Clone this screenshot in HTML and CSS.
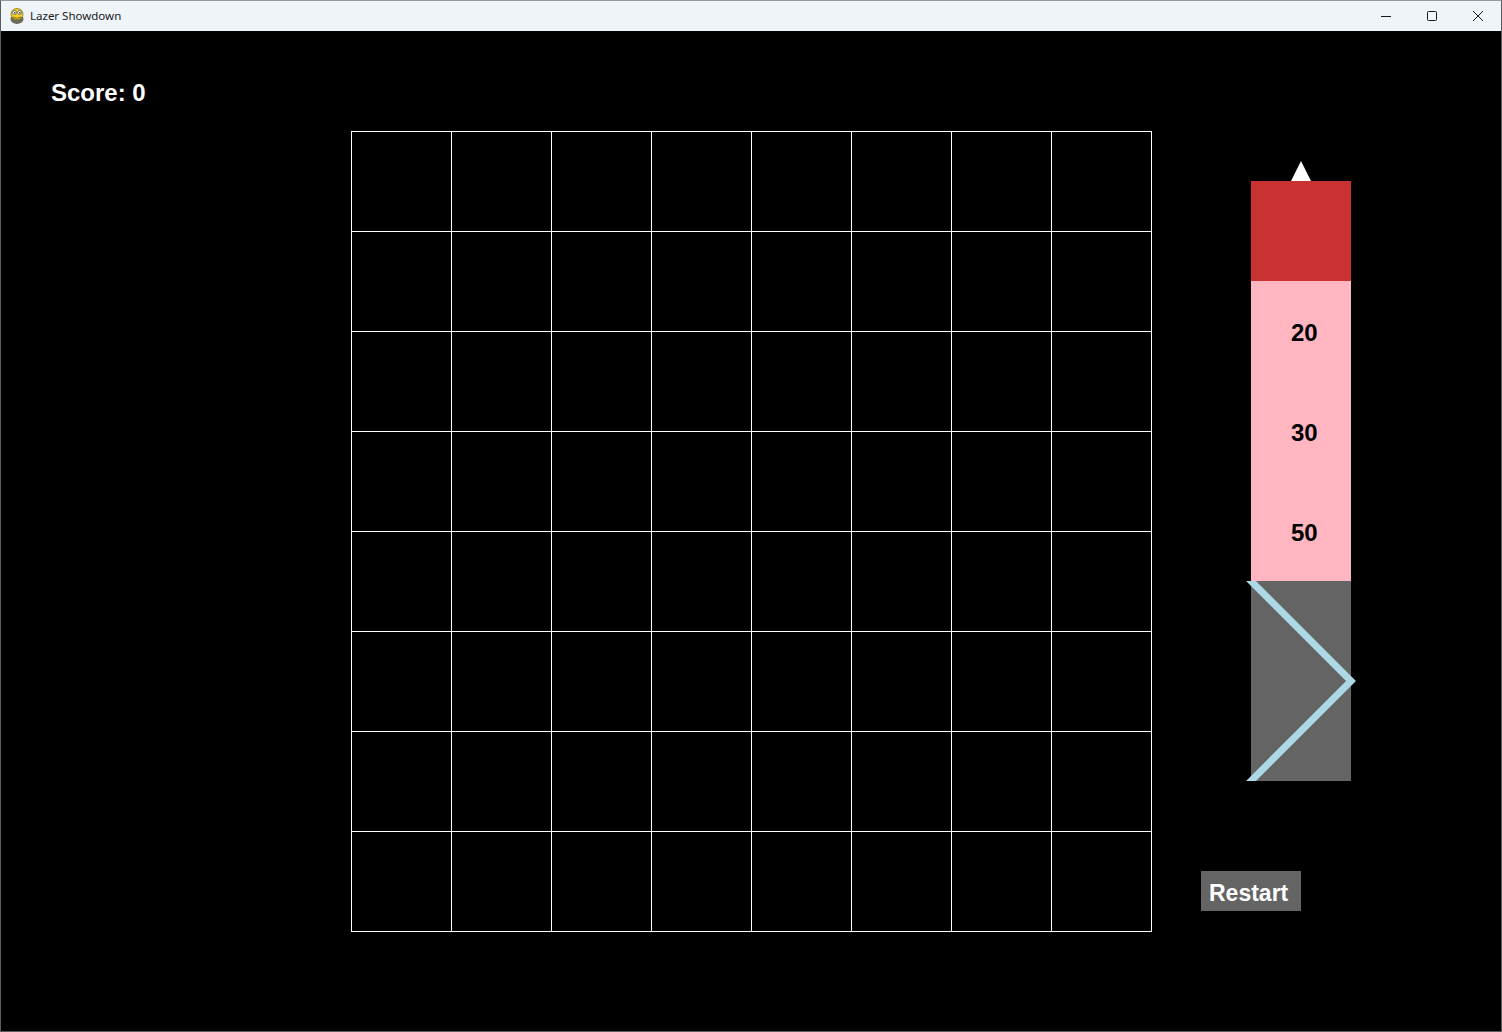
FILE: index.html
```html
<!DOCTYPE html>
<html>
<head>
<meta charset="utf-8">
<title>Lazer Showdown</title>
<link rel="stylesheet" href="styles.css">
</head>
<body>
<div class="window">
  <div class="titlebar">
    <div class="title-left">
      <svg class="app-icon" width="16" height="18" viewBox="0 0 16 18">
        <ellipse cx="8" cy="12" rx="6.5" ry="5" fill="#6b6b5a"/>
        <ellipse cx="8" cy="7" rx="6" ry="5.5" fill="#f2d22c" stroke="#8a7a10" stroke-width="0.8"/>
        <circle cx="5.5" cy="5.5" r="2" fill="#fff" stroke="#333" stroke-width="0.6"/>
        <circle cx="10.5" cy="5.5" r="2" fill="#fff" stroke="#333" stroke-width="0.6"/>
        <circle cx="5.8" cy="5.8" r="0.8" fill="#222"/>
        <circle cx="10.8" cy="5.8" r="0.8" fill="#222"/>
        <path d="M4 10 Q8 12.5 12 10" fill="none" stroke="#7a5a10" stroke-width="0.8"/>
      </svg>
      <span class="title-text">Lazer Showdown</span>
    </div>
    <div class="controls">
      <span class="ctl"><svg width="12" height="12" viewBox="0 0 12 12"><path d="M1 6.5 H11" stroke="#1a1a1a" stroke-width="1"/></svg></span>
      <span class="ctl"><svg width="12" height="12" viewBox="0 0 12 12"><rect x="1.5" y="1.5" width="9" height="9" rx="1" fill="none" stroke="#1a1a1a" stroke-width="1"/></svg></span>
      <span class="ctl"><svg width="12" height="12" viewBox="0 0 12 12"><path d="M1 1 L11 11 M11 1 L1 11" stroke="#1a1a1a" stroke-width="1"/></svg></span>
    </div>
  </div>
  <div class="game">
    <div class="left-col">
      <div class="score">Score: 0</div>
    </div>
    <div class="board">
      <div class="cell"></div><div class="cell"></div><div class="cell"></div><div class="cell"></div><div class="cell"></div><div class="cell"></div><div class="cell"></div><div class="cell"></div>
      <div class="cell"></div><div class="cell"></div><div class="cell"></div><div class="cell"></div><div class="cell"></div><div class="cell"></div><div class="cell"></div><div class="cell"></div>
      <div class="cell"></div><div class="cell"></div><div class="cell"></div><div class="cell"></div><div class="cell"></div><div class="cell"></div><div class="cell"></div><div class="cell"></div>
      <div class="cell"></div><div class="cell"></div><div class="cell"></div><div class="cell"></div><div class="cell"></div><div class="cell"></div><div class="cell"></div><div class="cell"></div>
      <div class="cell"></div><div class="cell"></div><div class="cell"></div><div class="cell"></div><div class="cell"></div><div class="cell"></div><div class="cell"></div><div class="cell"></div>
      <div class="cell"></div><div class="cell"></div><div class="cell"></div><div class="cell"></div><div class="cell"></div><div class="cell"></div><div class="cell"></div><div class="cell"></div>
      <div class="cell"></div><div class="cell"></div><div class="cell"></div><div class="cell"></div><div class="cell"></div><div class="cell"></div><div class="cell"></div><div class="cell"></div>
      <div class="cell"></div><div class="cell"></div><div class="cell"></div><div class="cell"></div><div class="cell"></div><div class="cell"></div><div class="cell"></div><div class="cell"></div>
    </div>
    <div class="right-col">
      <div class="queue">
        <div class="pointer"></div>
        <div class="slot slot-red"></div>
        <div class="slot slot-pink"><span class="num">20</span></div>
        <div class="slot slot-pink"><span class="num">30</span></div>
        <div class="slot slot-pink"><span class="num">50</span></div>
        <div class="slot slot-gray">
          <svg class="chevron" width="120" height="200" viewBox="0 0 120 200">
            <polyline points="5,-5 110,100 5,205" fill="none" stroke="#add8e6" stroke-width="7" stroke-linejoin="miter" stroke-miterlimit="10"/>
          </svg>
        </div>
      </div>
      <div class="restart">Restart</div>
    </div>
  </div>
</div>
</body>
</html>
```

FILE: styles.css
```css
* {
  box-sizing: border-box;
}

html, body {
  margin: 0;
  padding: 0;
  background: #000;
}

.window {
  width: 1502px;
  height: 1032px;
  border: 1px solid #5c5c5c;
  border-top-color: #9a9a9a;
  display: flex;
  flex-direction: column;
  overflow: hidden;
}

.titlebar {
  height: 30px;
  flex: none;
  background: #eff4f9;
  display: flex;
  align-items: center;
  justify-content: space-between;
}

.title-left {
  display: flex;
  align-items: center;
  padding-left: 8px;
}

.app-icon {
  display: block;
}

.title-text {
  margin-left: 5px;
  font-family: "Noto Sans", "DejaVu Sans", sans-serif;
  font-size: 11.5px;
  color: #1a1a1a;
  line-height: 16px;
}

.controls {
  display: flex;
  height: 30px;
}

.ctl {
  width: 46px;
  height: 30px;
  display: flex;
  align-items: center;
  justify-content: center;
}

.ctl svg {
  display: block;
}

.game {
  height: 1000px;
  flex: none;
  background: #000;
  display: flex;
  align-items: flex-start;
}

.left-col {
  width: 350px;
  flex: none;
  padding-left: 50px;
  padding-top: 50px;
}

.score {
  font-family: "Liberation Sans", Arial, sans-serif;
  font-weight: bold;
  font-size: 24px;
  line-height: 24px;
  color: #fff;
}

.board {
  margin-top: 100px;
  width: 801px;
  flex: none;
  display: grid;
  grid-template-columns: repeat(8, 100px);
  grid-template-rows: repeat(8, 100px);
  border-left: 1px solid #fff;
  border-top: 1px solid #fff;
}

.cell {
  border-right: 1px solid #fff;
  border-bottom: 1px solid #fff;
}

.right-col {
  flex: none;
  padding-left: 49px;
  display: flex;
  flex-direction: column;
  align-items: flex-start;
}

.queue {
  margin-left: 50px;
  margin-top: 130px;
  width: 100px;
  display: flex;
  flex-direction: column;
}

.pointer {
  align-self: center;
  width: 0;
  height: 0;
  border-left: 10px solid transparent;
  border-right: 10px solid transparent;
  border-bottom: 20px solid #fff;
}

.slot {
  width: 100px;
  height: 100px;
}

.slot-red {
  background: #c83232;
}

.slot-pink {
  background: #ffb6c1;
  padding-left: 40px;
  padding-top: 40px;
}

.num {
  display: block;
  font-family: "Liberation Sans", Arial, sans-serif;
  font-weight: bold;
  font-size: 24px;
  line-height: 24px;
  color: #000;
}

.slot-gray {
  height: 200px;
  background: #646464;
  position: relative;
}

.chevron {
  position: absolute;
  left: -10px;
  top: 0;
  overflow: hidden;
}

.restart {
  margin-top: 90px;
  width: 100px;
  height: 40px;
  background: #646464;
  color: #fff;
  font-family: "Liberation Sans", Arial, sans-serif;
  font-weight: bold;
  font-size: 23px;
  line-height: 36px;
  padding-top: 4px;
  padding-left: 8px;
  white-space: nowrap;
}
```
